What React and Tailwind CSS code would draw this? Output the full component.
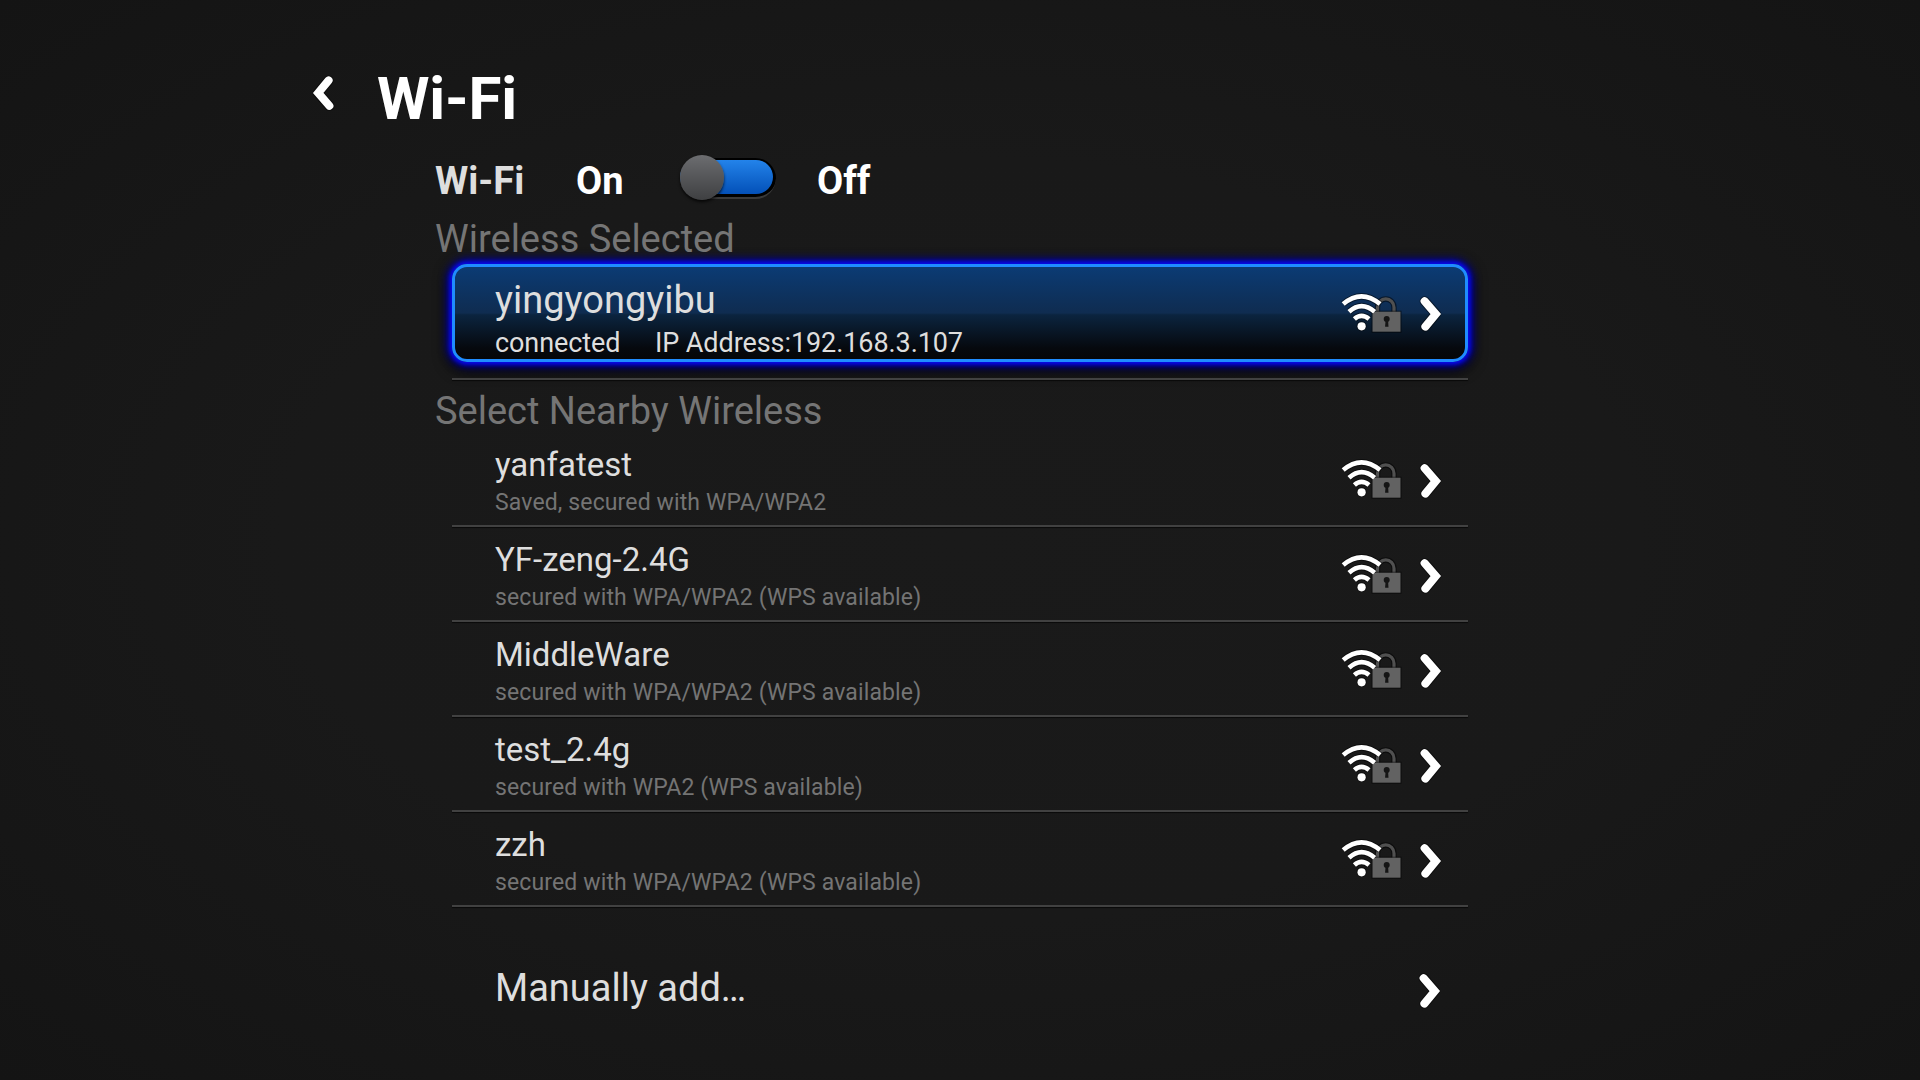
const networks = [
  { name: "yanfatest", detail: "Saved, secured with WPA/WPA2" },
  { name: "YF-zeng-2.4G", detail: "secured with WPA/WPA2 (WPS available)" },
  { name: "MiddleWare", detail: "secured with WPA/WPA2 (WPS available)" },
  { name: "test_2.4g", detail: "secured with WPA2 (WPS available)" },
  { name: "zzh", detail: "secured with WPA/WPA2 (WPS available)" },
];

function Chevron({ className = "" }) {
  return (
    <svg className={className} width="24" height="38" viewBox="0 0 24 38" fill="none">
      <path d="M5.6 6.2 L17 19 L6.4 31.6" stroke="#000" strokeOpacity="0.5" strokeWidth="10" strokeLinecap="round" strokeLinejoin="round" />
      <path d="M5.6 6.2 L16.8 19 L6.4 31.6" stroke="#fff" strokeWidth="8" strokeLinecap="round" strokeLinejoin="miter" />
    </svg>
  );
}

function SignalLock() {
  return (
    <svg width="62" height="42" viewBox="0 0 62 42" fill="none">
      <path d="M37.5 20 V14.4 A8.2 8.4 0 0 1 54 14.4 V20" stroke="#000" strokeOpacity="0.5" strokeWidth="5.4" />
      <path d="M37.5 20 V14.4 A8.2 8.4 0 0 1 54 14.4 V20" stroke="#505050" strokeWidth="3.2" />
      <rect x="31.5" y="17.7" width="30" height="22" fill="#000" fillOpacity="0.5" />
      <rect x="32.5" y="18.7" width="28" height="20" fill="#626262" />
      <circle cx="46.7" cy="26" r="3" fill="#151515" />
      <path d="M45.6 26.5 h2.4 l0.5 7.2 h-3.4 Z" fill="#151515" />
      <g stroke="#000" strokeOpacity="0.5" strokeWidth="6.4">
        <path d="M3.2 11 Q21.5 -4.3 40 11" />
        <path d="M9 18.8 Q21.5 7.4 34.6 18.8" />
        <path d="M14.4 26 Q21.5 19.8 29 26" />
      </g>
      <g stroke="#fff" strokeWidth="4.7">
        <path d="M3.2 11 Q21.5 -4.3 40 11" />
        <path d="M9 18.8 Q21.5 7.4 34.6 18.8" />
        <path d="M14.4 26 Q21.5 19.8 29 26" />
      </g>
      <circle cx="21.6" cy="33.3" r="5" fill="#000" fillOpacity="0.5" />
      <circle cx="21.6" cy="33.3" r="4.1" fill="#fff" />
    </svg>
  );
}

function RowIcons() {
  return (
    <div className="ml-auto flex items-center gap-[17px]">
      <div className="mb-px">
        <SignalLock />
      </div>
      <Chevron />
    </div>
  );
}

function Divider() {
  return <div className="ml-px h-[2px] w-[1016px] bg-[#414141] shadow-[0_1px_1px_#000000a0]" />;
}

function Toggle() {
  return (
    <div className="flex h-[41px] w-[96px] items-center rounded-full border-b-2 border-[#3a3a3a] bg-black p-[3px] pl-0">
      <div className="flex h-[34px] w-full items-center rounded-full bg-linear-to-b from-[#2383ea] to-[#0450b8]">
        <div className="mt-px h-[45px] w-[44px] shrink-0 rounded-full bg-linear-to-b from-[#6c6d70] to-[#3f4042] shadow-[0_2px_3px_#000000c0]" />
      </div>
    </div>
  );
}

function NetworkRow({ name, detail }) {
  return (
    <li className="h-[95px]">
      <div className="flex h-[93px] pr-[25px] pl-[44px]">
        <div className="pt-[12px]">
          <div className="h-[43px] text-[33px] leading-[41px] text-[#dedede]">{name}</div>
          <div className="h-[31px] text-[23px] leading-[31px] tracking-[0.13px] text-[#747474]">{detail}</div>
        </div>
        <div className="ml-auto flex h-[97px] items-center">
          <RowIcons />
        </div>
      </div>
      <Divider />
    </li>
  );
}

export default function App() {
  return (
    <main className="h-[1080px] w-[1920px] overflow-hidden bg-[#181818] bg-radial-[ellipse_at_center] from-[#1a1a1a] via-[#191919] to-[#141414] font-['Roboto',sans-serif] whitespace-nowrap">
      <header className="flex h-[134px] pt-[62px] pl-[311px]">
        <Chevron className="mt-[12px] rotate-180" />
        <h1 className="ml-[42px] text-[60px] leading-[73px] font-bold tracking-[-0.2px] text-white">Wi-Fi</h1>
      </header>
      <section className="ml-[435px] w-[1050px]">
        <div className="mt-[11px] flex h-[72px] items-center text-[38px] leading-[44px] font-bold text-white">
          <span className="w-[141px] text-[#dedede]">Wi-Fi</span>
          <span className="w-[104px]">On</span>
          <div className="mb-[6px]"><Toggle /></div>
          <span className="ml-[41px]">Off</span>
        </div>
        <h2 className="h-[44px] text-[38px] leading-[44px] text-[#757575]">Wireless Selected</h2>
        <div className="pt-[3px] pl-[16px]">
          <div className="ml-px flex h-[98px] w-[1016px] rounded-[15px] border-3 border-[#1f8cff] bg-[linear-gradient(to_bottom,#0b3b74_0%,#0f2c50_50%,#0b243f_52%,#06090e_88%,#050608_100%)] pr-[22px] pl-[40px] shadow-[0_0_4px_2px_#0a0af0,0_0_10px_4px_#0000c8,0_4px_14px_5px_#000000]">
            <div className="pt-[9px]">
              <div className="h-[50px] text-[38px] leading-[48px] text-[#dedede]">yingyongyibu</div>
              <div className="flex h-[33px] text-[27px] leading-[34px] tracking-[-0.08px] text-[#dedede]">
                <span className="w-[160px]">connected</span>
                <span>IP Address:192.168.3.107</span>
              </div>
            </div>
            <div className="ml-auto flex h-[94px] items-center">
              <RowIcons />
            </div>
          </div>
        </div>
        <div className="pt-[16px] pl-[16px]"><Divider /></div>
        <h2 className="mt-[9px] h-[44px] text-[38px] leading-[44px] text-[#757575]">Select Nearby Wireless</h2>
        <ul className="-mt-px w-[1033px] pl-[16px]">
          {networks.map((n) => (
            <NetworkRow key={n.name} {...n} />
          ))}
        </ul>
        <div className="mt-[56px] flex h-[50px] w-[1032px] items-center justify-between pr-[25px] pl-[60px]">
          <span className="text-[38px] leading-[50px] text-[#dedede]">Manually add…</span>
          <Chevron className="mt-[5px]" />
        </div>
      </section>
    </main>
  );
}
